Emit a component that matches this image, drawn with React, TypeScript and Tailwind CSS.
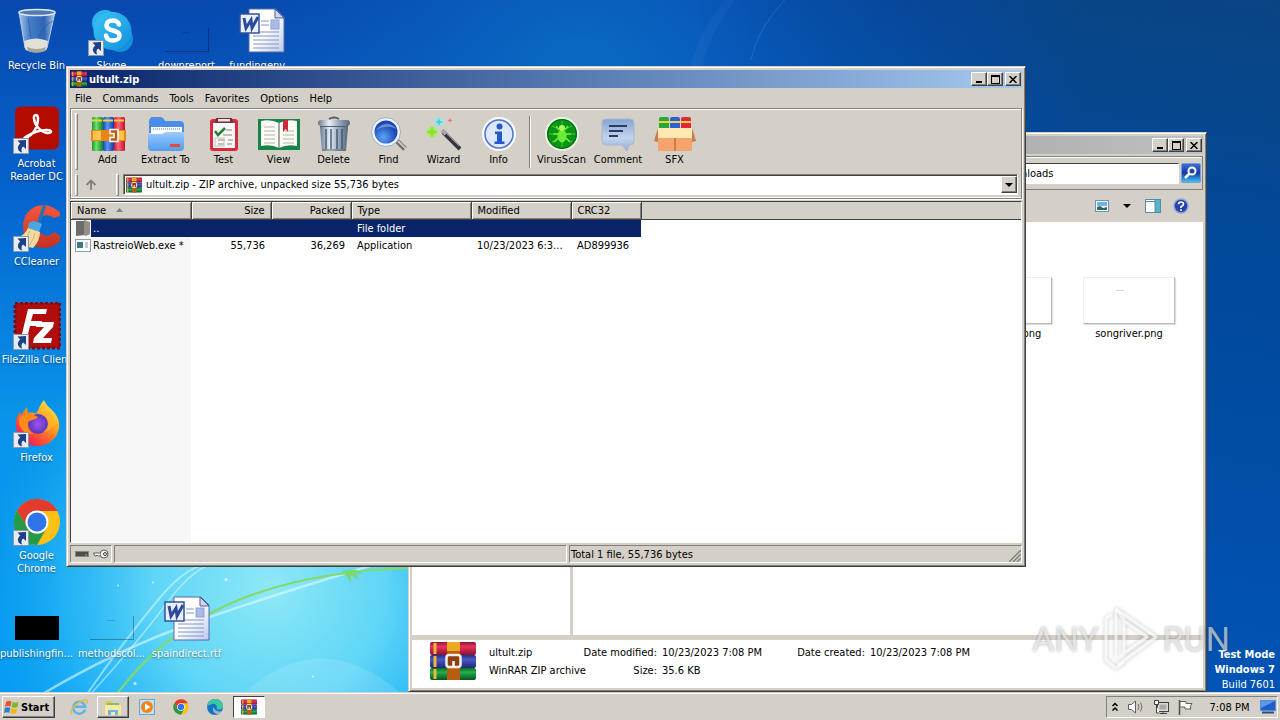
import type { ReactNode } from 'react';
import clsx from 'clsx';

const raised =
  'bg-[#d4d0c8] border border-t-white border-l-white border-r-[#404040] border-b-[#404040] shadow-[inset_-1px_-1px_0_#808080]';
const sunken = 'border border-t-[#808080] border-l-[#808080] border-r-white border-b-white';

/* ---------- wallpaper ---------- */

const Wallpaper = () => (
  <svg
    className="absolute inset-0 h-full w-full"
    viewBox="0 0 1280 693"
    preserveAspectRatio="xMidYMid slice"
    aria-hidden="true"
  >
    <defs>
      <linearGradient id="sky" x1="0" y1="0" x2="0" y2="1">
        <stop offset="0" stopColor="#0748ae" />
        <stop offset="0.3" stopColor="#0566cf" />
        <stop offset="0.6" stopColor="#0894ea" />
        <stop offset="1" stopColor="#079cf4" />
      </linearGradient>
      <radialGradient id="glow" cx="270" cy="590" r="290" gradientUnits="userSpaceOnUse">
        <stop offset="0" stopColor="#8fe9f6" />
        <stop offset="0.4" stopColor="#6fe0f8" stopOpacity="0.85" />
        <stop offset="0.7" stopColor="#36c4f8" stopOpacity="0.6" />
        <stop offset="1" stopColor="#12a5f0" stopOpacity="0" />
      </radialGradient>
      <radialGradient id="top" cx="580" cy="90" r="380" gradientUnits="userSpaceOnUse">
        <stop offset="0" stopColor="#0b6cc4" />
        <stop offset="1" stopColor="#0758b8" stopOpacity="0" />
      </radialGradient>
      <linearGradient id="side" x1="1" y1="0" x2="0.7" y2="1">
        <stop offset="0" stopColor="#0a4583" />
        <stop offset="0.35" stopColor="#01489a" />
        <stop offset="1" stopColor="#0155b8" />
      </linearGradient>
      <linearGradient id="fade" x1="700" y1="0" x2="1080" y2="0" gradientUnits="userSpaceOnUse">
        <stop offset="0" stopColor="#000" />
        <stop offset="1" stopColor="#fff" />
      </linearGradient>
      <mask id="sideMask">
        <rect width="1280" height="693" fill="url(#fade)" />
      </mask>
    </defs>
    <rect width="1280" height="693" fill="url(#sky)" />
    <rect width="1280" height="693" fill="url(#top)" />
    <rect width="1280" height="693" fill="url(#glow)" />
    <rect width="1280" height="693" fill="url(#side)" mask="url(#sideMask)" />
    <path d="M725 0Q700 30 690 68h12Q710 34 735 0z" fill="#fff" opacity="0.03" />
    <g fill="none" strokeLinecap="round">
      <path d="M45 693Q110 655 170 632T345 574T420 556" stroke="#dffaff" strokeWidth="2.500" opacity="0.6" />
      <path d="M88 693Q125 640 160 598T225 565" stroke="#e4fbff" strokeWidth="2" opacity="0.5" />
      <path d="M92 693Q140 640 165 606T210 565" stroke="#e4fbff" strokeWidth="1.500" opacity="0.5" />
      <path d="M118 693C170 625 250 572 420 568" stroke="#84d968" strokeWidth="2" />
      <path d="M785 0q-28 30-34 60" stroke="#9cc0e8" opacity="0.2" />
    </g>
    <path d="M342 571l9 12v-7l8 4-3-6h7l-8-4z" fill="#7cd872" />
    <path d="M245 693Q320 625 400 693z" fill="#fff" opacity="0.12" />
    <g fill="#fff" opacity="0.7">
      <circle cx="226" cy="580" r="1.5" />
      <circle cx="118" cy="586" r="1" />
      <circle cx="135" cy="684" r="1.5" />
      <circle cx="313" cy="677" r="1" />
      <circle cx="153" cy="583" r="1" />
    </g>
  </svg>
);

/* ---------- desktop icons ---------- */

const ShortcutArrow = () => (
  <svg className="absolute bottom-0 left-0 size-4" viewBox="0 0 16 16" aria-hidden="true">
    <rect x="0.5" y="0.5" width="15" height="15" fill="#e6ecf4" stroke="#8d99a8" />
    <path d="M4.500 2.500l8.500-.5v9l-2.800-2.600C8.500 9.500 8 11.500 9 14.500 4.500 13 3.500 8.500 7.200 5.400z" fill="#1d4184" />
  </svg>
);

const RecycleBin = () => (
  <svg viewBox="0 0 48 48" className="size-12">
    <defs>
      <linearGradient id="bin">
        <stop offset="0" stopColor="#d5e6f6" stopOpacity="0.8" />
        <stop offset="0.3" stopColor="#5f93cf" stopOpacity="0.7" />
        <stop offset="0.7" stopColor="#3e6fb4" stopOpacity="0.7" />
        <stop offset="1" stopColor="#cfe0f2" stopOpacity="0.9" />
      </linearGradient>
    </defs>
    <path d="M6 4l6 36q11 6 22 0L42 4z" fill="url(#bin)" stroke="#b9cde4" />
    <ellipse cx="24" cy="4.500" rx="18" ry="3" fill="#4f7cb4" stroke="#dfe8f2" strokeWidth="1.500" />
    <path d="M11 33q12-5 24 0l-1.500 9q-10 5-21 0z" fill="#e3e0da" />
    <path d="M14 39q10 4 19 0l-1 4q-8 3-17 0z" fill="#a8a39c" />
    <path d="M15 10l3 20M40 13q-10 4-14 16" stroke="#24549c" fill="none" opacity="0.6" />
  </svg>
);

const Skype = () => (
  <svg viewBox="0 0 48 48" className="size-12">
    <defs>
      <linearGradient id="skype" x1="0" y1="0" x2="1" y2="1">
        <stop offset="0" stopColor="#39c5f3" />
        <stop offset="1" stopColor="#1490dc" />
      </linearGradient>
    </defs>
    <circle cx="17" cy="15" r="13" fill="#2cb4ec" />
    <circle cx="32" cy="31" r="13" fill="#1490dc" />
    <circle cx="24.500" cy="23" r="19" fill="url(#skype)" />
    <path
      d="M31 16.500c-1-3-3.500-4-6.500-4-3.500 0-6 1.700-6 4.700 0 6.800 13 3.800 13 10.300 0 3.300-3 5-6.500 5s-6.500-1.500-7-5"
      fill="none"
      stroke="#fff"
      strokeWidth="4.500"
      strokeLinecap="round"
    />
  </svg>
);

const Thumb = ({ black }: { black?: boolean }) => (
  <div
    className={clsx(
      'mb-1 h-6 w-11',
      black ? 'bg-black' : 'border-r border-b border-black/30',
    )}
  >
    {!black && <div className="mx-auto mt-1 h-px w-2 bg-black/15" />}
  </div>
);

const WordDoc = () => (
  <svg viewBox="0 0 48 48" className="size-12">
    <defs>
      <linearGradient id="doc" x1="0" y1="0" x2="1" y2="1">
        <stop offset="0.5" stopColor="#fff" />
        <stop offset="1" stopColor="#bcc9ec" />
      </linearGradient>
    </defs>
    <path d="M11 1h27l8 8v35H11z" fill="url(#doc)" stroke="#5a6ba8" />
    <path d="M37 1v9h9z" fill="#cfd8f0" stroke="#4b5c9c" />
    <path d="M23 13h8M23 17h8M15 24h26M15 28h26M15 32h26M15 36h26M15 40h26" stroke="#8494c4" />
    <rect x="33" y="12" width="8" height="9" fill="#a9bbe2" stroke="#8fa3d6" />
    <rect x="2" y="6" width="19" height="19" fill="#e9effc" stroke="#34509e" strokeWidth="1.500" />
    <path d="M6 10l2 10 5-8 1 8 6-11" fill="none" stroke="#2a4aa0" strokeWidth="3" />
  </svg>
);

const Acrobat = () => (
  <svg viewBox="0 0 48 48" className="size-12">
    <rect x="2" y="0.500" width="44" height="43" rx="6" fill="#b30b00" />
    <path
      d="M12 32c8-2 13-11 13-20-.5-4-5-4-4 1 1 7 7 13 13 14 6 .5 5-3.500-1-3-8 .5-14 3-19 6-4 2.500-4 4-2 2z"
      fill="none"
      stroke="#fff"
      strokeWidth="2.500"
      strokeLinejoin="round"
    />
  </svg>
);

const CCleaner = () => (
  <svg viewBox="0 0 48 48" className="size-12">
    <defs>
      <linearGradient id="cc" x1="0" y1="0" x2="0" y2="1">
        <stop offset="0" stopColor="#f5573f" />
        <stop offset="1" stopColor="#c23122" />
      </linearGradient>
    </defs>
    <path
      d="M47 9C37-2 20-1 13 11c-8 15 1 32 17 33 7 0 13-2 17-7v-5l-5-4c-9 7-17 3-17-7 0-9 8-13 16-7l6-2z"
      fill="url(#cc)"
    />
    <path d="M31 3l-6 18" stroke="#2b6fb4" strokeWidth="3.500" strokeLinecap="round" />
    <path d="M16 19q5-4 13 1l-3 8-11-4z" fill="#48a8e0" />
    <path d="M15 24l12 4q0 9-7 16Q8 42 4 34q8-3 11-10z" fill="#f4d9a0" />
    <path d="M17 27q-3 8-8 11M22 29q-2 8-6 13" stroke="#d8b070" fill="none" />
  </svg>
);

const FileZilla = () => (
  <svg viewBox="0 0 48 48" className="size-12">
    <rect x="2" y="1" width="45" height="45" fill="#b30c0c" stroke="#7c0a0e" strokeWidth="3" strokeDasharray="3 2" />
    <path d="M8 36L15 7h19l-1 5H20l-2 7h11l-1 5H17l-3 12z" fill="#fff" />
    <path d="M24 20h17l-1 5-10 11h9l-1 5H20l1-5 10-11h-8z" fill="#fff" />
  </svg>
);

const Firefox = () => (
  <svg viewBox="0 0 48 48" className="size-12">
    <defs>
      <linearGradient id="ff" x1="1" y1="0" x2="0.200" y2="1">
        <stop offset="0.100" stopColor="#fff04a" />
        <stop offset="0.450" stopColor="#ff9a1f" />
        <stop offset="0.800" stopColor="#fb3b3f" />
        <stop offset="1" stopColor="#e0157a" />
      </linearGradient>
      <radialGradient id="ffp">
        <stop offset="0" stopColor="#a255f0" />
        <stop offset="1" stopColor="#5a35b8" />
      </radialGradient>
    </defs>
    <path
      d="M31 0c2 5 4 6 8 10 5 5 8 11 7 18-2 12-12 18-22 18C12 46 3 37 3 25c0-6 1-9 4-13l1 3 6-8 1 6c3-1 7 0 9 1 1-5 3-9 7-14z"
      fill="url(#ff)"
    />
    <circle cx="25" cy="24" r="10" fill="url(#ffp)" />
    <path d="M6 18c5-5 12-5 19-1-2 3-7 3-9 4-3 3-1 10 5 13C11 35 5 28 6 18z" fill="#ff8a18" />
    <path d="M22 13q8-2 12 4 4 9-4 15 10-1 12-10-2-9-9-12-6-2-11 3z" fill="#ffb52a" opacity="0.600" />
  </svg>
);

const Chrome = ({ className }: { className: string }) => (
  <svg viewBox="0 0 48 48" className={className}>
    <circle cx="24" cy="24" r="23" fill="#fbc116" />
    <path d="M4 12.500A23 23 0 0 1 44.500 13H24a11 11 0 0 0-10 16z" fill="#e33b2e" />
    <path d="M4 12.500A23 23 0 0 0 24 47l10-17.500A11 11 0 0 1 14.500 29.500z" fill="#269a47" />
    <circle cx="24" cy="24" r="11.500" fill="#fff" />
    <circle cx="24" cy="24" r="9.500" fill="#2f74e8" />
  </svg>
);

type DesktopItem = { label: string; icon: ReactNode; shortcut?: boolean };

const desktopRows: DesktopItem[][] = [
  [
    { label: 'Recycle Bin', icon: <RecycleBin /> },
    { label: 'Skype', icon: <Skype />, shortcut: true },
    { label: 'downreport', icon: <Thumb /> },
    { label: 'fundingenv...', icon: <WordDoc /> },
  ],
  [{ label: 'Acrobat Reader DC', icon: <Acrobat />, shortcut: true }],
  [{ label: 'CCleaner', icon: <CCleaner />, shortcut: true }],
  [{ label: 'FileZilla Client', icon: <FileZilla />, shortcut: true }],
  [{ label: 'Firefox', icon: <Firefox />, shortcut: true }],
  [{ label: 'Google Chrome', icon: <Chrome className="size-12" />, shortcut: true }],
  [
    { label: 'publishingfin...', icon: <Thumb black /> },
    { label: 'methodscol...', icon: <Thumb /> },
    { label: 'spaindirect.rtf', icon: <WordDoc /> },
  ],
];

const DesktopIcons = () => (
  <div className="relative -ml-px flex flex-col pt-2">
    {desktopRows.map((row, i) => (
      <div key={i} className="flex h-[98px]">
        {row.map((item) => (
          <a key={item.label} href="#" className="flex w-[75px] flex-col items-center gap-[3px]">
            <span className="relative flex size-12 items-end justify-center">
              {item.icon}
              {item.shortcut && <ShortcutArrow />}
            </span>
            <span
              className={clsx(
                'text-center leading-[13px] text-white [text-shadow:0_1px_2px_rgba(0,0,0,0.5)]',
                item.label.includes('Acrobat') || item.label.includes('Google') ? 'w-[60px]' : 'whitespace-nowrap',
              )}
            >
              {item.label}
            </span>
          </a>
        ))}
      </div>
    ))}
  </div>
);

/* ---------- archive icons ---------- */

const BooksStack = ({ className }: { className: string }) => (
  <svg viewBox="0 0 46 40" preserveAspectRatio="none" className={className}>
    <defs>
      <linearGradient id="bookR" x1="0" y1="0" x2="0" y2="1">
        <stop offset="0" stopColor="#8e1434" />
        <stop offset="0.350" stopColor="#e8345c" />
        <stop offset="1" stopColor="#8a1030" />
      </linearGradient>
      <linearGradient id="bookB" x1="0" y1="0" x2="0" y2="1">
        <stop offset="0" stopColor="#28307c" />
        <stop offset="0.350" stopColor="#4a58cc" />
        <stop offset="1" stopColor="#22286c" />
      </linearGradient>
      <linearGradient id="bookG" x1="0" y1="0" x2="0" y2="1">
        <stop offset="0" stopColor="#0a6a2c" />
        <stop offset="0.350" stopColor="#25b04c" />
        <stop offset="1" stopColor="#06541f" />
      </linearGradient>
    </defs>
    <rect y="1" width="46" height="13" rx="2" fill="url(#bookR)" />
    <rect y="14" width="46" height="13" rx="2" fill="url(#bookB)" />
    <rect y="27" width="46" height="12" rx="2" fill="url(#bookG)" />
    <path d="M5 2v11M5 15v11M5 28v10" stroke="#f0b838" strokeWidth="3" />
    <path d="M17 1h13v38H17z" fill="#b85c14" />
    <path d="M17 1h13v9H17z" fill="#f0a820" />
    <rect x="16.500" y="14" width="14" height="12" rx="2.500" fill="#8a4010" stroke="#f4f0e8" strokeWidth="2.500" />
    <path d="M23.500 20v6" stroke="#fff" strokeWidth="2.500" />
  </svg>
);

const BooksUpright = () => (
  <svg viewBox="0 0 36 36" className="size-9">
    <defs>
      <linearGradient id="upG">
        <stop offset="0" stopColor="#1c9a2c" />
        <stop offset="0.400" stopColor="#6ae070" />
        <stop offset="1" stopColor="#128420" />
      </linearGradient>
      <linearGradient id="upB">
        <stop offset="0" stopColor="#1844b8" />
        <stop offset="0.400" stopColor="#5a98f4" />
        <stop offset="1" stopColor="#1238a0" />
      </linearGradient>
      <linearGradient id="upR">
        <stop offset="0" stopColor="#c81838" />
        <stop offset="0.400" stopColor="#ff6478" />
        <stop offset="1" stopColor="#c01030" />
      </linearGradient>
    </defs>
    <rect x="2" y="1" width="11" height="34" rx="1.500" fill="url(#upG)" />
    <rect x="13" y="1" width="11" height="34" rx="1.500" fill="url(#upB)" />
    <rect x="24" y="1" width="11" height="34" rx="1.500" fill="url(#upR)" />
    <path d="M2 4.500h33" stroke="#f4d040" strokeWidth="2" strokeDasharray="10 1" />
    <path d="M1 14h35v11H1z" fill="#e88418" />
    <path d="M3 15h8v9H3zM27 15h7v9h-7z" fill="#ffc24a" />
    <path d="M20 13.500h8v12h-8v-4h4v-4h-4z" fill="#b85c10" stroke="#fff" strokeWidth="1.500" />
  </svg>
);

const ExtractIcon = () => (
  <svg viewBox="0 0 38 36" className="h-9 w-[38px]">
    <defs>
      <linearGradient id="fold" x1="0" y1="0" x2="0" y2="1">
        <stop offset="0" stopColor="#9ccbfb" />
        <stop offset="1" stopColor="#4f9cf0" />
      </linearGradient>
    </defs>
    <path d="M2 6q0-5 4-5h7q3 0 5 4h15q4 0 4 4v8H2z" fill="#4a8eea" />
    <path d="M4 11h31v10H4z" fill="#fff" />
    <path d="M6 13h27" stroke="#a8bcd8" strokeDasharray="1 1" strokeWidth="2" />
    <path d="M1 18h14l4-2h18v15q0 4-4 4H5q-4 0-4-4z" fill="url(#fold)" />
    <path d="M23 28h10v3H23z" fill="#e24a3c" />
  </svg>
);

const TestIcon = () => (
  <svg viewBox="0 0 30 36" className="h-9 w-[30px]">
    <rect x="1" y="3" width="28" height="32" rx="3" fill="#d42c3c" />
    <path d="M4 7h22v25H4z" fill="#f8f8f6" />
    <path d="M7 2h16l1 5H6z" fill="#6c3438" />
    <path d="M9 3h12v2.500H9z" fill="#e8e4e4" />
    <path d="M6 15l3 4 7-7" fill="none" stroke="#1f8434" strokeWidth="2.500" />
    <path d="M17 14h6M14 19h9M9 24h7M19 24h5M9 28h6M18 28h5" stroke="#b0aca8" strokeWidth="1.500" />
    <rect x="6" y="22" width="9" height="8" fill="none" stroke="#c4c0bc" />
  </svg>
);

const ViewIcon = () => (
  <svg viewBox="0 0 44 36" className="h-9 w-11">
    <path d="M1 3h42v31H1z" fill="#17824a" />
    <path d="M4 5q10-2 18 2 8-4 18-2v25q-10-2-18 2-8-4-18-2z" fill="#fbfaf4" />
    <path d="M22 7v25" stroke="#8c8a84" strokeWidth="1.500" />
    <path d="M7 11h11M7 15h11M7 19h11M7 23h11M7 27h11M26 15h11M26 19h11M26 23h11M26 27h11" stroke="#b8b4a8" />
    <path d="M26 4h5v12l-2.500-3-2.500 3z" fill="#d0283c" />
  </svg>
);

const DeleteIcon = () => (
  <svg viewBox="0 0 34 36" className="h-9 w-[34px]">
    <defs>
      <linearGradient id="can">
        <stop offset="0" stopColor="#66788c" />
        <stop offset="0.350" stopColor="#eaf1f8" />
        <stop offset="0.600" stopColor="#a4b4c8" />
        <stop offset="1" stopColor="#56667a" />
      </linearGradient>
    </defs>
    <path d="M12 3q5-3 10 0" fill="none" stroke="#55606c" strokeWidth="2" />
    <rect x="1" y="4" width="32" height="6" rx="3" fill="url(#can)" />
    <path d="M3 11h28l-2 24H5z" fill="url(#can)" />
    <path d="M9 13v20M14 13v20M20 13v20M25 13v20" stroke="#40566e" strokeWidth="2" opacity="0.700" />
    <path d="M5 34h24M3 10.500h28" stroke="#55606c" />
  </svg>
);

const FindIcon = () => (
  <svg viewBox="0 0 36 36" className="size-9">
    <defs>
      <radialGradient id="lens" cx="0.400" cy="0.700">
        <stop offset="0" stopColor="#5fa4f8" />
        <stop offset="1" stopColor="#1748b4" />
      </radialGradient>
    </defs>
    <path d="M26 25l8 8" stroke="#6c6c70" strokeWidth="5" />
    <path d="M27 25l8 8" stroke="#c8c8cc" strokeWidth="2" />
    <circle cx="15" cy="16" r="13" fill="url(#lens)" stroke="#eef2fa" strokeWidth="3" />
    <circle cx="15" cy="16" r="14.500" fill="none" stroke="#9cacc8" />
    <path d="M5 14Q15 2 26 13 15 8 5 14z" fill="#fff" opacity="0.350" />
  </svg>
);

const WizardIcon = () => (
  <svg viewBox="0 0 36 36" className="size-9">
    <path d="M17 16l17 17" stroke="#36363a" strokeWidth="4" />
    <path d="M16 14l4 4" stroke="#a8a8ac" strokeWidth="4" />
    <path d="M19 16l14 14" stroke="#98989c" />
    <circle cx="13" cy="6" r="5" fill="#86ecf4" opacity="0.500" />
    <circle cx="6" cy="16" r="6" fill="#a4f04c" opacity="0.500" />
    <path d="M13 2l1 3 3 1-3 1-1 3-1-3-3-1 3-1z" fill="#34d4e8" />
    <path d="M6 10l2 4 4 2-4 2-2 4-2-4-4-2 4-2z" fill="#86e82c" />
    <path d="M24 2l.8 1.700 1.700.8-1.700.8L24 7l-.8-1.700-1.700-.8 1.700-.8z" fill="#f06c84" />
  </svg>
);

const InfoIcon = () => (
  <svg viewBox="0 0 36 36" className="size-9">
    <circle cx="18" cy="18" r="16" fill="#e4ecf8" stroke="#f8faff" strokeWidth="2" />
    <circle cx="18" cy="18" r="14" fill="#dfe8fa" stroke="#4b74d4" strokeWidth="1.500" />
    <circle cx="18.500" cy="10.500" r="3" fill="#2456cc" />
    <path d="M14 15.500h7v10h2.500v2.500h-10v-2.500H16V18h-2z" fill="#2456cc" />
  </svg>
);

const VirusIcon = () => (
  <svg viewBox="0 0 36 36" className="size-9">
    <circle cx="18" cy="18" r="16" fill="#0c9418" stroke="#e8f4e4" strokeWidth="2" />
    <circle cx="18" cy="18" r="14.500" fill="none" stroke="#0a6414" />
    <path d="M5 18h26M18 5v26M8 10q10 6 20 0M8 26q10-6 20 0" stroke="#2fd42c" fill="none" />
    <path d="M12 10l3 4M24 10l-3 4M9 18h5M27 18h-5M10 26l4-4M26 26l-4-4" stroke="#6cec34" strokeWidth="1.500" />
    <ellipse cx="18" cy="20" rx="4.500" ry="6.500" fill="#6cec34" />
    <circle cx="18" cy="12" r="3" fill="#a4ff5c" />
  </svg>
);

const CommentIcon = () => (
  <svg viewBox="0 0 36 36" className="size-9">
    <defs>
      <linearGradient id="bub" x1="0" y1="0" x2="0" y2="1">
        <stop offset="0" stopColor="#86a4d4" />
        <stop offset="0.600" stopColor="#c4d4ec" />
        <stop offset="1" stopColor="#90acd8" />
      </linearGradient>
    </defs>
    <path d="M6 3h24q4 0 4 4v18q0 4-4 4h-1l-2 6-5-6H6q-4 0-4-4V7q0-4 4-4z" fill="url(#bub)" stroke="#a8b8d0" />
    <path d="M9 10h18M9 15h14M9 20h9" stroke="#2c3c60" strokeWidth="1.800" />
  </svg>
);

const SfxIcon = () => (
  <svg viewBox="0 0 42 36" className="h-9 w-[42px]">
    <rect x="5" y="1" width="10" height="16" rx="2" fill="#28a838" />
    <rect x="16" y="1" width="10" height="16" rx="2" fill="#2a62d8" />
    <rect x="27" y="1" width="10" height="16" rx="2" fill="#e02838" />
    <path d="M5 6h32" stroke="#f4d040" strokeWidth="2" strokeDasharray="10 1" />
    <path d="M4 20h34v15H4z" fill="#f4a46c" />
    <path d="M4 12h34l2 10H2z" fill="#ffe8b4" />
    <path d="M4 12l-4 13 4 1zM38 12l4 13-4 1z" fill="#c87c48" />
    <path d="M21 22v13" stroke="#d07c44" strokeWidth="2" />
  </svg>
);

/* ---------- window chrome ---------- */

const CaptionButtons = () => (
  <div className="flex pr-px">
    <button aria-label="Minimize" className={clsx(raised, 'flex h-3.5 w-4 items-end pb-[2px] pl-1')}>
      <span className="h-0.5 w-1.5 bg-black" />
    </button>
    <button aria-label="Maximize" className={clsx(raised, 'flex h-3.5 w-4 items-center justify-center')}>
      <span className="h-[9px] w-[9px] border border-t-2 border-black" />
    </button>
    <button aria-label="Close" className={clsx(raised, 'ml-0.5 flex h-3.5 w-4 items-center justify-center')}>
      <svg viewBox="0 0 8 7" className="h-[7px] w-2">
        <path d="M0.500 0l7 7M7.500 0l-7 7" stroke="#000" strokeWidth="1.500" />
      </svg>
    </button>
  </div>
);

const Gripper = ({ className }: { className?: string }) => (
  <div className={clsx('w-[3px] border border-t-white border-l-white border-r-[#808080] border-b-[#808080]', className)} />
);

const tools: { label: string; icon: ReactNode; width: string }[] = [
  { label: 'Add', icon: <BooksUpright />, width: 'w-[55px]' },
  { label: 'Extract To', icon: <ExtractIcon />, width: 'w-[61px]' },
  { label: 'Test', icon: <TestIcon />, width: 'w-[55px]' },
  { label: 'View', icon: <ViewIcon />, width: 'w-[55px]' },
  { label: 'Delete', icon: <DeleteIcon />, width: 'w-[55px]' },
  { label: 'Find', icon: <FindIcon />, width: 'w-[55px]' },
  { label: 'Wizard', icon: <WizardIcon />, width: 'w-[55px]' },
  { label: 'Info', icon: <InfoIcon />, width: 'w-[55px]' },
];

const extraTools: typeof tools = [
  { label: 'VirusScan', icon: <VirusIcon />, width: 'w-[55px]' },
  { label: 'Comment', icon: <CommentIcon />, width: 'w-[58px]' },
  { label: 'SFX', icon: <SfxIcon />, width: 'w-[55px]' },
];

const ToolButton = ({ tool }: { tool: (typeof tools)[number] }) => (
  <button className={clsx('flex flex-col items-center gap-px whitespace-nowrap', tool.width)}>
    {tool.icon}
    <span className="leading-[13px]">{tool.label}</span>
  </button>
);

const headCell = 'border-r border-r-[#404040] px-1.5 font-normal shadow-[inset_1px_1px_0_#fff,inset_-1px_-1px_0_#808080]';

const FileTable = () => (
  <table className="w-full table-fixed border-collapse">
    <colgroup>
      <col className="w-[120px]" />
      <col className="w-[80px]" />
      <col className="w-[80px]" />
      <col className="w-[120px]" />
      <col className="w-[100px]" />
      <col className="w-[70px]" />
      <col />
    </colgroup>
    <thead>
      <tr className="h-[17px] border-b border-[#404040] bg-[#d4d0c8] text-left">
        <th className={headCell}>
          <span className="flex items-center gap-2.5">
            Name
            <svg viewBox="0 0 7 4" className="h-1 w-[7px]">
              <path d="M0 4l3.500-4L7 4z" fill="#808080" />
            </svg>
          </span>
        </th>
        <th className={clsx(headCell, 'text-right')}>Size</th>
        <th className={clsx(headCell, 'text-right')}>Packed</th>
        <th className={headCell}>Type</th>
        <th className={headCell}>Modified</th>
        <th className={headCell}>CRC32</th>
        <th />
      </tr>
    </thead>
    <tbody>
      <tr className="h-[17px]">
        <td className="bg-[#0a246a] p-0 text-white">
          <span className="flex items-center gap-0.5">
            <svg viewBox="0 0 20 17" className="h-[17px] w-5 bg-[#f7f7f7]">
              <path d="M5 1h9v14l-9 1z" fill="#6c6c68" />
              <path d="M13 0l6 2v12l-4 2-2-1z" fill="#948e86" />
            </svg>
            ..
          </span>
        </td>
        <td className="bg-[#0a246a]" />
        <td className="bg-[#0a246a]" />
        <td className="bg-[#0a246a] px-1.5 py-0 text-white">File folder</td>
        <td className="bg-[#0a246a]" />
        <td className="bg-[#0a246a]" />
        <td />
      </tr>
      <tr className="h-[17px]">
        <td className="bg-[#f7f7f7] p-0">
          <span className="flex items-center gap-0.5 whitespace-nowrap">
            <svg viewBox="0 0 20 17" className="h-[17px] w-5">
              <rect x="4.500" y="2.500" width="15" height="12" fill="#fff" stroke="#8ca0a8" />
              <path d="M6 5h6v6H6z" fill="#3c7c80" />
              <path d="M14 6h3M14 8h3M14 10h3" stroke="#7ca0a8" />
            </svg>
            RastreioWeb.exe *
          </span>
        </td>
        <td className="px-1.5 py-0 text-right">55,736</td>
        <td className="px-1.5 py-0 text-right">36,269</td>
        <td className="px-1.5 py-0">Application</td>
        <td className="py-0 pr-0 pl-1.5 whitespace-nowrap">10/23/2023 6:3...</td>
        <td className="px-1.5 py-0">AD899936</td>
        <td />
      </tr>
    </tbody>
  </table>
);

const ArchiveWindow = () => (
  <section className="absolute top-[66px] left-[66px] flex h-[501px] w-[960px] flex-col border border-t-[#d4d0c8] border-l-[#d4d0c8] border-r-[#404040] border-b-[#404040] bg-[#d4d0c8] p-[3px] shadow-[inset_1px_1px_0_#fff,inset_-1px_-1px_0_#808080]">
    <header className="flex h-[18px] shrink-0 items-center bg-linear-to-r from-[#0a246a] to-[#a6caf0] pl-px">
      <BooksStack className="size-4" />
      <h1 className="flex-1 pl-0.5 font-bold text-white">ultult.zip</h1>
      <CaptionButtons />
    </header>
    <nav className="flex h-5 shrink-0 items-center gap-[11px] pl-[5px]">
      {['File', 'Commands', 'Tools', 'Favorites', 'Options', 'Help'].map((item) => (
        <button key={item}>{item}</button>
      ))}
    </nav>
    <div className="shrink-0 border border-[#808080] shadow-[inset_1px_1px_0_#fff,1px_1px_0_#fff]">
      <div className="flex h-[63px] pt-1 pl-1">
        <Gripper className="mr-0.5 mb-0.5" />
        <div className="flex pt-[3px]">
          {tools.map((tool) => (
            <ToolButton key={tool.label} tool={tool} />
          ))}
          <div className="mx-[3px] mb-1 w-0.5 border-l border-[#808080] bg-white" />
          {extraTools.map((tool) => (
            <ToolButton key={tool.label} tool={tool} />
          ))}
        </div>
      </div>
      <div className="flex h-[26px] items-center border-b border-white pr-[3px] pl-1">
        <Gripper className="h-[22px]" />
        <button aria-label="Up one level" className="flex w-[26px] justify-center">
          <svg viewBox="0 0 12 12" className="size-3">
            <path d="M6 11V2M1.500 6L6 1.500 10.500 6" fill="none" stroke="#808080" strokeWidth="1.800" />
          </svg>
        </button>
        <Gripper className="mr-1 ml-3 h-[22px]" />
        <div className={clsx(sunken, 'flex h-[21px] flex-1 items-center bg-white pl-0.5 shadow-[inset_1px_1px_0_#404040]')}>
          <BooksStack className="size-4" />
          <select aria-label="Archive path" className="h-full flex-1 appearance-none pl-1 outline-none">
            <option>ultult.zip - ZIP archive, unpacked size 55,736 bytes</option>
          </select>
          <span className={clsx(raised, 'flex h-[17px] w-4 items-center justify-center')}>
            <svg viewBox="0 0 8 4" className="h-1 w-2">
              <path d="M0 0h8L4 4z" />
            </svg>
          </span>
        </div>
      </div>
    </div>
    <div className="mt-0.5 flex min-h-0 flex-1 flex-col border border-t-[#404040] border-l-[#404040] border-r-white border-b-white bg-white">
      <FileTable />
      <div className="w-[120px] flex-1 bg-[#f7f7f7]" />
    </div>
    <footer className="mt-0.5 flex h-[18px] shrink-0 gap-0.5">
      <div className={clsx(sunken, 'flex w-[42px] items-center gap-1 pl-1')}>
        <svg viewBox="0 0 14 6" className="h-1.5 w-3.5">
          <rect x="0.500" y="0.500" width="13" height="5" fill="#4c4c4c" stroke="#888" />
          <path d="M10 4h2" stroke="#4ce84c" />
        </svg>
        <svg viewBox="0 0 16 12" className="h-3 w-4">
          <circle cx="11" cy="6" r="4" fill="#f4f4f4" stroke="#606060" />
          <circle cx="12" cy="6" r="1.500" fill="none" stroke="#404040" />
          <path d="M7 5H0.500L2 8h1l1-1 1 1h2" fill="#f4f4f4" stroke="#606060" />
        </svg>
      </div>
      <div className={clsx(sunken, 'w-[453px]')} />
      <div className={clsx(sunken, 'flex flex-1 items-center pl-px')}>
        <span className="flex-1">Total 1 file, 55,736 bytes</span>
        <svg viewBox="0 0 12 12" className="size-3 self-end">
          <path d="M0 12L12 0M4 12l8-8M8 12l4-4" stroke="#808080" strokeWidth="1.500" />
        </svg>
      </div>
    </footer>
  </section>
);

/* ---------- explorer ---------- */

const FileThumb = ({ label, mark }: { label: string; mark?: boolean }) => (
  <figure className="flex w-[92px] flex-col items-center gap-[3px]">
    <div className="h-[47px] w-full border border-t-[#eee] border-l-[#eee] border-r-[#bbb] border-b-[#bbb] bg-white shadow-[1px_1px_1px_#ddd]">
      {mark && <div className="mt-3 ml-8 h-px w-2 bg-gray-300" />}
    </div>
    <figcaption className="leading-[13px]">{label}</figcaption>
  </figure>
);

const ExplorerWindow = () => (
  <section className="absolute top-[132px] left-[408px] flex h-[560px] w-[799px] flex-col border border-t-[#d4d0c8] border-l-[#d4d0c8] border-r-[#404040] border-b-[#404040] bg-[#d4d0c8] p-[3px] shadow-[inset_1px_1px_0_#fff,inset_-1px_-1px_0_#808080]">
    <header className="flex h-[18px] shrink-0 items-center justify-end bg-linear-to-r from-[#808080] to-[#c0c0c0]">
      <CaptionButtons />
    </header>
    <div className="mt-0.5 flex h-[34px] shrink-0 items-center justify-end gap-0.5 border border-[#808080] pr-px shadow-[inset_1px_1px_0_#fff]">
      <input
        aria-label="Search"
        placeholder="Search Downloads"
        className="h-[21px] w-[222px] border border-t-[#404040] border-l-[#404040] border-r-white border-b-white bg-white pl-1 placeholder:text-black"
      />
      <button aria-label="Go" className="size-5 rounded-xs border border-[#7c9cd8] bg-linear-to-b from-[#3c6cd0] via-[#1838a8] to-[#48c0ec]">
        <svg viewBox="0 0 18 18" className="size-full">
          <circle cx="10" cy="7" r="3.500" fill="none" stroke="#fff" strokeWidth="2" />
          <path d="M7.500 9.500L3 14" stroke="#fff" strokeWidth="2.500" />
        </svg>
      </button>
    </div>
    <div className="flex h-8 shrink-0 items-center justify-end pr-3.5">
      <button aria-label="Change view">
        <svg viewBox="0 0 14 12" className="h-3 w-3.5">
          <rect x="0.500" y="0.500" width="13" height="11" fill="#fff" stroke="#6c94b8" />
          <path d="M2 2h10v4H2z" fill="#6cb4ec" />
          <path d="M2 10V7l3-1 3 2 4-1v3z" fill="#2c6c50" />
        </svg>
      </button>
      <button aria-label="More views" className="mx-3.5">
        <svg viewBox="0 0 8 4" className="h-1 w-2">
          <path d="M0 0h8L4 4z" />
        </svg>
      </button>
      <button aria-label="Preview pane">
        <svg viewBox="0 0 16 14" className="h-3.5 w-4">
          <rect x="0.500" y="0.500" width="15" height="13" fill="#fff" stroke="#5c88ac" />
          <path d="M10 1h5v12h-5z" fill="#54b4c8" />
          <path d="M1 2.500h9M10 1v12" stroke="#5c88ac" />
        </svg>
      </button>
      <button aria-label="Help" className="ml-3">
        <svg viewBox="0 0 16 16" className="size-4">
          <circle cx="8" cy="8" r="7" fill="#2444a8" stroke="#8ca4dc" strokeWidth="1.500" />
          <path d="M5.500 6.300Q5.700 4 8 4t2.500 2Q10.500 7.300 8 8.700V10M8 11.300V13" fill="none" stroke="#fff" strokeWidth="1.700" />
        </svg>
      </button>
    </div>
    <div className="flex min-h-0 flex-1 bg-white">
      <div className="w-[158px]" />
      <div className="w-[3px] bg-[#d4d0c8]" />
      <div className="flex flex-1 justify-end gap-[31px] pt-[55px] pr-7">
        <FileThumb label="thanksbig.png" />
        <FileThumb label="songriver.png" mark />
      </div>
    </div>
    <div className="h-[5px] shrink-0 bg-[#d4d0c8]" />
    <footer className="flex h-12 shrink-0 items-start bg-white pt-px pl-[18px]">
      <BooksStack className="h-10 w-[46px]" />
      <div className="ml-[13px] grid grid-cols-[80px_83px_118px_80px_1fr] items-center gap-x-[5px] gap-y-[3px] pt-1 whitespace-nowrap">
        <span>ultult.zip</span>
        <span className="text-right">Date modified:</span>
        <span>10/23/2023 7:08 PM</span>
        <span className="text-right">Date created:</span>
        <span>10/23/2023 7:08 PM</span>
        <span>WinRAR ZIP archive</span>
        <span className="text-right">Size:</span>
        <span>35.6 KB</span>
      </div>
    </footer>
  </section>
);

/* ---------- taskbar ---------- */

const WindowsFlag = () => (
  <svg viewBox="0 0 16 16" className="size-4 shrink-0">
    <path d="M2 3q3-2 5.500-.5L6.500 7.500Q4 6.500 1 8z" fill="#e8562c" />
    <path d="M8.500 3q3 1.500 6 0l-1 5q-3 1.500-6 0z" fill="#7cb828" />
    <path d="M.8 9q3-1.500 5.500-.2l-1 5Q3 12.500 0 14z" fill="#2c7cd8" />
    <path d="M7.300 9q3 1.500 6 .2l-1 5q-3 1.300-6 0z" fill="#f4b81c" />
  </svg>
);

const launchers: { label: string; state?: 'open' | 'active'; icon: ReactNode }[] = [
  {
    label: 'Internet Explorer',
    icon: (
      <svg viewBox="0 0 18 18" className="size-[18px]">
        <path d="M15 11.500A6 6 0 1 1 15.200 8.800H5" fill="none" stroke="#5cb4ec" strokeWidth="2.400" />
        <path d="M2 16Q-1 12 7 6t10-3q1 1-1 3" fill="none" stroke="#ecb83c" strokeWidth="1.400" />
      </svg>
    ),
  },
  {
    label: 'Windows Explorer',
    state: 'open',
    icon: (
      <svg viewBox="0 0 18 18" className="size-[18px]">
        <path d="M1 3h6l2 2h7v12H1z" fill="#e8c860" />
        <path d="M3 5h12v4H3z" fill="#78c070" />
        <path d="M1 7h16v10H1z" fill="#fbe9a0" />
        <path d="M4 17v-5h10v5h-3v-3H7v3z" fill="#6cb4e4" />
      </svg>
    ),
  },
  {
    label: 'Media Player',
    icon: (
      <svg viewBox="0 0 18 18" className="size-[18px]">
        <rect x="1.500" y="1.500" width="15" height="15" fill="#c8e0f4" stroke="#6ca4d4" />
        <circle cx="9" cy="9" r="6" fill="#f08418" />
        <path d="M7 5.500v7L12.500 9z" fill="#fff" />
      </svg>
    ),
  },
  { label: 'Chrome', icon: <Chrome className="size-4" /> },
  {
    label: 'Edge',
    icon: (
      <svg viewBox="0 0 18 18" className="size-[18px]">
        <circle cx="9" cy="9" r="8" fill="#1474c8" />
        <path d="M1 9Q2 1 9.500 1 17 1.500 17 8q-.5 4-5 3.500-2-.5-1-2.500-1-4-5-3T1 9z" fill="#3cc8a4" />
        <path d="M7 9q-1 6 5 7.500 3-.5 4.500-3.500-6 2-9.500-4z" fill="#d4d0c8" opacity="0.700" />
      </svg>
    ),
  },
  { label: 'WinRAR', state: 'active', icon: <BooksStack className="size-4" /> },
];

const Taskbar = () => (
  <footer className="flex h-7 shrink-0 items-center border-t border-[#d4d0c8] bg-[#d4d0c8] px-0.5 pb-px shadow-[inset_0_1px_0_#fff]">
    <button className={clsx(raised, 'mt-0.5 flex h-[22px] w-[53px] items-center gap-px pl-px font-bold')}>
      <WindowsFlag />
      Start
    </button>
    <div className="mt-0.5 ml-2 flex flex-1 gap-0.5">
      {launchers.map((item) => (
        <button
          key={item.label}
          aria-label={item.label}
          className={clsx(
            'flex h-[22px] w-8 items-center justify-center',
            item.state === 'open' && raised,
            item.state === 'active' && 'border border-t-[#404040] border-l-[#404040] border-r-white border-b-white bg-white',
          )}
        >
          {item.icon}
        </button>
      ))}
    </div>
    <div className={clsx(sunken, 'mt-0.5 flex h-[22px] w-[172px] items-center pl-1')}>
      <svg viewBox="0 0 8 10" className="h-2.5 w-2">
        <path d="M1.500 4L4 1.500 6.500 4M1.500 8.500L4 6l2.500 2.500" fill="none" stroke="#000" strokeWidth="1.500" />
      </svg>
      <svg viewBox="0 0 18 16" className="ml-2 h-4 w-[18px]">
        <path d="M1.500 5.500h3L8.500 2v12l-4-3.500h-3z" fill="#fff" stroke="#606060" />
        <path d="M11 5q2 3 0 6M13.500 3.500q3 4.500 0 9" fill="none" stroke="#707070" />
      </svg>
      <svg viewBox="0 0 16 16" className="ml-2 size-4">
        <rect x="4.500" y="3.500" width="11" height="9" fill="#d8d8d8" stroke="#404040" />
        <path d="M6.500 5.500h7v5h-7z" fill="#a8a8a8" />
        <path d="M7 14.500h7M10 12v2" stroke="#404040" />
        <path d="M1.500 1.500h4v4h-4zM3.500 6v8h3" fill="#fff" stroke="#404040" />
      </svg>
      <svg viewBox="0 0 16 16" className="ml-2 size-4">
        <path d="M2.500 1v15" stroke="#505050" strokeWidth="1.500" />
        <path d="M3 2.500h6v2h6q-3 3-1 5.500H8V8H3z" fill="#fff" stroke="#606060" />
      </svg>
      <time className="flex-1 pl-1.5 text-center">7:08 PM</time>
      <svg viewBox="0 0 16 14" className="mr-px h-3.5 w-4">
        <rect x="0.500" y="0.500" width="15" height="10" fill="#1f5fc8" stroke="#5c8cd4" />
        <path d="M1 1h14L1 8z" fill="#5c98e8" />
        <path d="M2 12.500h12" stroke="#2c4c84" strokeWidth="2" />
      </svg>
    </div>
  </footer>
);

const Watermark = () => (
  <div className="pointer-events-none absolute right-[50px] bottom-5 flex items-center gap-0.5 font-['Roboto',sans-serif] text-[34px] leading-none text-white/60 [text-shadow:0_0_3px_rgba(0,0,0,0.35)]">
    <span>ANY</span>
    <svg viewBox="0 0 60 66" className="h-[66px] w-[60px] drop-shadow-[0_0_2px_rgba(0,0,0,0.3)]">
      <g fill="none" stroke="#fff" strokeOpacity="0.700" strokeWidth="3" strokeLinejoin="round">
        <path d="M15 3v49M15 3l40 28-38 28" />
        <path d="M15 3l8 10v34L46 31 23 15" />
        <path d="M5 12v42l10 8 8-6M5 12l6-3" />
      </g>
    </svg>
    <span>RUN</span>
  </div>
);

export default function App() {
  return (
    <div className="flex h-screen flex-col overflow-hidden font-['DejaVu_Sans_Condensed','DejaVu_Sans',sans-serif] text-[11px] leading-[15px] text-black">
      <main className="relative min-h-0 flex-1 overflow-hidden">
        <Wallpaper />
        <DesktopIcons />
        <div className="absolute right-[5px] bottom-0 text-right text-white">
          <p className="font-bold">Test Mode</p>
          <p className="font-bold">Windows 7</p>
          <p>Build 7601</p>
        </div>
        <ExplorerWindow />
        <ArchiveWindow />
        <Watermark />
      </main>
      <Taskbar />
    </div>
  );
}
